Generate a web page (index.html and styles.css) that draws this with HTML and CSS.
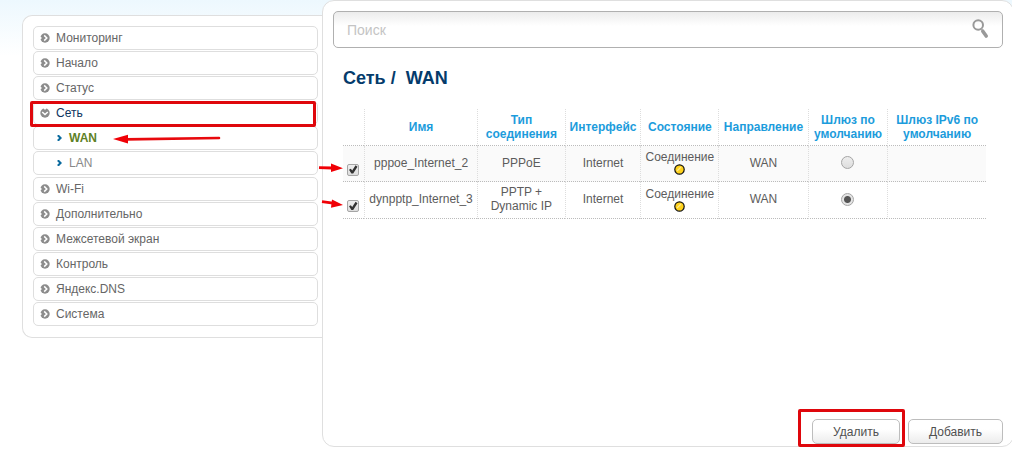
FILE: index.html
```html
<!DOCTYPE html>
<html lang="ru">
<head>
<meta charset="utf-8">
<title>Сеть / WAN</title>
<link rel="stylesheet" href="styles.css">
</head>
<body>
<svg class="defs" aria-hidden="true">
  <symbol id="right" viewBox="0 0 10 10"><circle cx="5" cy="5" r="4.7" fill="#8c8c8c"/><path d="M0 3.2 2 5 0 6.8Z" fill="#fff"/><path d="M4.2 2.4 6.8 5 4.2 7.6" fill="none" stroke="#fff" stroke-width="1.5"/></symbol>
  <symbol id="down" viewBox="0 0 10 10"><circle cx="5" cy="5" r="4.7" fill="#8c8c8c"/><path d="M3.2 0 5 2 6.8 0Z" fill="#fff"/><path d="M2.2 4 5 6.6 7.8 4" fill="none" stroke="#fff" stroke-width="1.5"/></symbol>
  <symbol id="sub" viewBox="0 0 5 6"><path d="M.8.2 3.6 3 .8 5.8" fill="none" stroke="#0a6a9e" stroke-width="2"/></symbol>
  <symbol id="status" viewBox="0 0 11 11"><circle cx="5.5" cy="5.5" r="4.7" fill="#ffd21c" stroke="#111" stroke-width="1.2"/><path d="M3 7 7 3" stroke="#ffe98a" stroke-width="1.2"/></symbol>
</svg>
<div class="page">
  <nav class="sidebar">
    <ul class="menu">
      <li><a class="item" href="#"><svg class="bullet"><use href="#right"/></svg>Мониторинг</a></li>
      <li><a class="item" href="#"><svg class="bullet"><use href="#right"/></svg>Начало</a></li>
      <li><a class="item" href="#"><svg class="bullet"><use href="#right"/></svg>Статус</a></li>
      <li class="open">
        <a class="item current" href="#"><svg class="bullet"><use href="#down"/></svg>Сеть<span class="frame frame-menu"></span></a>
        <ul class="menu submenu">
          <li><a class="item subitem active" href="#"><svg class="chevron"><use href="#sub"/></svg>WAN
            <svg class="arrow arrow-menu" viewBox="0 0 108 10"><path d="M13 5.4 106 4" stroke="#e8090d" stroke-width="2.6" stroke-linecap="round"/><path d="M0 5 15 .8V9.4Z" fill="#f00006"/></svg></a></li>
          <li><a class="item subitem" href="#"><svg class="chevron"><use href="#sub"/></svg>LAN</a></li>
        </ul>
      </li>
      <li><a class="item" href="#"><svg class="bullet"><use href="#right"/></svg>Wi-Fi</a></li>
      <li><a class="item" href="#"><svg class="bullet"><use href="#right"/></svg>Дополнительно</a></li>
      <li><a class="item" href="#"><svg class="bullet"><use href="#right"/></svg>Межсетевой экран</a></li>
      <li><a class="item" href="#"><svg class="bullet"><use href="#right"/></svg>Контроль</a></li>
      <li><a class="item" href="#"><svg class="bullet"><use href="#right"/></svg>Яндекс.DNS</a></li>
      <li><a class="item" href="#"><svg class="bullet"><use href="#right"/></svg>Система</a></li>
    </ul>
  </nav>
  <main class="content">
    <div class="search">
      <input class="search-input" type="text" placeholder="Поиск" aria-label="Поиск">
      <svg class="magnifier" viewBox="0 0 18 20"><circle cx="6.2" cy="6" r="4.8" fill="none" stroke="#999" stroke-width="2"/><path d="m9 9.6 1.4 1.6" stroke="#aaa" stroke-width="1.4"/><path d="m10.8 12.2 3.4 4.8" stroke="#999" stroke-width="3.6" stroke-linecap="round"/></svg>
    </div>
    <h1 class="title">Сеть /&nbsp; WAN</h1>
    <table class="grid">
      <colgroup><col class="c-check"><col class="c-name"><col class="c-type"><col class="c-iface"><col class="c-state"><col class="c-dir"><col class="c-gw"><col></colgroup>
      <thead>
        <tr><th></th><th>Имя</th><th>Тип соединения</th><th>Интерфейс</th><th>Состояние</th><th>Направление</th><th>Шлюз по умолчанию</th><th>Шлюз IPv6 по умолчанию</th></tr>
      </thead>
      <tbody>
        <tr class="odd">
          <td class="pick"><input class="check" type="checkbox" checked aria-label="pppoe_Internet_2"><svg class="arrow arrow-row" viewBox="0 0 25 10"><path d="M1 4.6 14 5" stroke="#f00006" stroke-width="2.8"/><path d="M13 .6 25 5.2 13 9Z" fill="#f00006"/></svg></td>
          <td>pppoe_Internet_2</td><td>PPPoE</td><td>Internet</td>
          <td class="state">Соединение<svg class="dot"><use href="#status"/></svg></td>
          <td>WAN</td><td><input class="radio" type="radio" name="gw" aria-label="Шлюз pppoe_Internet_2"></td><td></td>
        </tr>
        <tr>
          <td class="pick"><input class="check" type="checkbox" checked aria-label="dynpptp_Internet_3"><svg class="arrow arrow-row" viewBox="0 0 25 10"><path d="M4 2.6 15 4.2" stroke="#f00006" stroke-width="2.8"/><path d="M14 .4 25 6 13 8.8Z" fill="#f00006"/></svg></td>
          <td>dynpptp_Internet_3</td><td>PPTP + Dynamic IP</td><td>Internet</td>
          <td class="state">Соединение<svg class="dot"><use href="#status"/></svg></td>
          <td>WAN</td><td><input class="radio" type="radio" name="gw" checked aria-label="Шлюз dynpptp_Internet_3"></td><td></td>
        </tr>
      </tbody>
    </table>
    <div class="actions">
      <div class="marked"><button class="btn" type="button">Удалить</button><span class="frame frame-btn"></span></div>
      <button class="btn btn-add" type="button">Добавить</button>
    </div>
  </main>
</div>
</body>
</html>
```
FILE: styles.css
```css
* { box-sizing: border-box; }
body {
  margin: 0;
  overflow-x: hidden;
  background: linear-gradient(#edf8fe, #fff 56px);
  color: #5c5c5c;
  font: 12px/14px "Liberation Sans", Arial, sans-serif;
}
svg { flex: none; }
.defs { position: absolute; width: 0; height: 0; }
.page {
  display: flex;
  align-items: flex-start;
  min-height: 100vh;
  margin-right: -2px;
  padding: 0 0 2px 22px;
}
.sidebar {
  flex: none;
  width: 301px;
  margin: 15px -1px 0 0;
  padding: 10px 5px 11px 10px;
  background: #fff;
  border: 1px solid #dfdfdf;
  border-right: 0;
  border-radius: 10px 0 0 10px;
}
.menu {
  display: flex;
  flex-direction: column;
  gap: 1px;
  margin: 0;
  padding: 0;
  list-style: none;
}
.submenu { margin-top: 1px; }
.open { padding-bottom: 1px; }
.item {
  position: relative;
  display: flex;
  align-items: center;
  gap: 6px;
  height: 24px;
  padding: 0 6px;
  border: 1px solid #dedede;
  border-radius: 5px;
  color: #666;
  text-decoration: none;
}
.current { z-index: 1; color: #0d3560; }
.subitem { gap: 7px; padding-left: 23px; color: #888; }
.active { color: #5e8127; font-weight: bold; }
.bullet { width: 10px; height: 10px; }
.chevron { width: 5px; height: 6px; }
.frame {
  position: absolute;
  border: 3px solid #df070c;
  border-radius: 2px;
  pointer-events: none;
}
.frame-menu { inset: -1px 1px -3px -4px; }
.frame-btn { inset: -10px -5px -3px -14px; }
.arrow { position: absolute; }
.arrow-menu { left: 79px; top: 7px; width: 108px; height: 10px; }
.arrow-row { left: -25px; top: 17px; width: 25px; height: 10px; }
.content {
  display: flex;
  flex: 1;
  flex-direction: column;
  min-width: 0;
  min-height: calc(100vh - 2px);
  padding: 10px 10px 2px;
  background: #fff;
  border: 1px solid #dfdfdf;
  border-radius: 12px;
}
.search {
  display: flex;
  align-items: center;
  height: 37px;
  padding: 0 12px 0 13px;
  border: 1px solid #b0b0b0;
  border-radius: 5px;
  background: linear-gradient(#ececec, #fff 14px);
}
.search-input {
  flex: 1;
  min-width: 0;
  padding: 0;
  border: 0;
  outline: 0;
  background: none;
  color: #555;
  font: 14px/18px "Liberation Sans", Arial, sans-serif;
}
.search-input::placeholder { color: #c4c4c4; opacity: 1; }
.magnifier { width: 18px; height: 20px; margin-bottom: 2px; }
.title {
  margin: 19px 10px 20px;
  color: #043b6b;
  font-size: 18px;
  line-height: 22px;
}
.grid {
  width: calc(100% - 27px);
  margin-left: 10px;
  border-collapse: separate;
  border-spacing: 0;
  table-layout: fixed;
}
.c-check { width: 21px; }
.c-name { width: 17.6%; }
.c-type { width: 13.6%; }
.c-iface { width: 11.8%; }
.c-state { width: 12.1%; }
.c-dir { width: 13.9%; }
.c-gw { width: 12.4%; }
.grid th, .grid td {
  padding: 0 2px;
  border-bottom: 1px dotted #bbb;
  text-align: center;
  vertical-align: middle;
}
.grid th + th, .grid td + td { border-left: 1px dotted #ddd; }
.grid th { height: 37px; color: #1c9cdc; }
.grid td { height: 36px; padding-bottom: 2px; }
.grid tbody tr + tr td { height: 37px; }
.odd { background: #fafafa; }
.grid .pick {
  position: relative;
  padding: 12px 0 0;
}
.grid .state { padding: 0 0 2px; }
.dot { display: block; width: 11px; height: 11px; margin: 0 auto; }
.check, .radio {
  display: block;
  appearance: none;
  width: 13px;
  height: 13px;
  margin: 0 auto;
  border: 1px solid #a5a5a5;
  background: linear-gradient(#eee, #ddd);
}
.check { width: 12px; height: 12px; margin-left: 4px; border-radius: 2px; }
.check:checked::before {
  content: "";
  display: block;
  height: 10px;
  background: #333;
  clip-path: polygon(10% 52%, 28% 42%, 42% 60%, 76% 8%, 95% 22%, 52% 90%, 34% 90%);
}
.radio { border-radius: 50%; }
.radio:checked { background: radial-gradient(circle, #555 0 3px, #e4e4e4 4px); }
.actions {
  display: flex;
  justify-content: flex-end;
  gap: 8px;
  margin-top: auto;
}
.marked { position: relative; }
.btn {
  width: 88px;
  height: 25px;
  padding: 0;
  border: 1px solid #bdbdbd;
  border-radius: 5px;
  background: linear-gradient(#fff 40%, #ececec);
  color: #505050;
  font: 12px/14px "Liberation Sans", Arial, sans-serif;
}
.btn-add { width: 95px; }
```
